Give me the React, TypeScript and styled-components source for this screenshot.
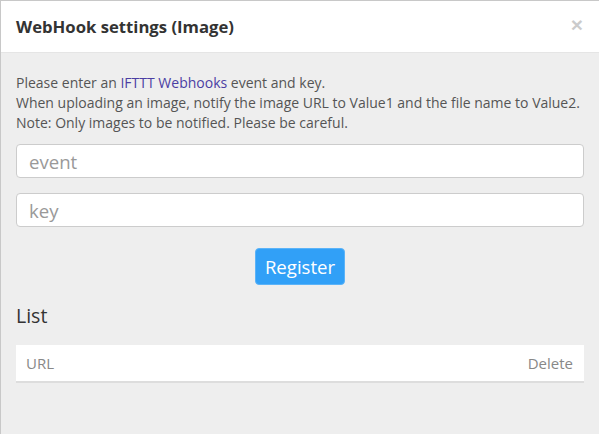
import React from "react";
import styled, { createGlobalStyle } from "styled-components";

const Global = createGlobalStyle`
  html, body { margin: 0; padding: 0; background: #eeeeee; }
  body { font-family: "Open Sans", "Noto Sans", sans-serif; }
  * { box-sizing: border-box; }
`;

const Modal = styled.div`
  width: 599px;
  height: 434px;
  overflow: hidden;
  border-top: 1px solid #c8c8c8;
  border-left: 1px solid #c8c8c8;
  background: #eeeeee;
  display: flex;
  flex-direction: column;
`;

const Header = styled.div`
  background: #ffffff;
  border-bottom: 1px solid #e5e5e5;
  padding: 15px 15px;
  display: flex;
  align-items: center;
  justify-content: space-between;
`;

const Title = styled.h4`
  margin: 0;
  font-size: 16.7px;
  line-height: 21px;
  font-weight: 700;
  color: #333333;
`;

const Close = styled.button`
  border: 0;
  background: transparent;
  padding: 0;
  margin-right: 1px;
  margin-top: -4px;
  font-family: "Liberation Sans", Arial, sans-serif;
  font-size: 21px;
  font-weight: 700;
  line-height: 1;
  color: #000;
  opacity: 0.2;
  text-shadow: 0 1px 0 #fff;
  cursor: pointer;
`;

const Body = styled.div`
  padding: 20px 15px 0 15px;
  display: flex;
  flex-direction: column;
`;

const Intro = styled.p`
  margin: 0 0 11px 0;
  font-size: 14px;
  line-height: 20px;
  color: #555555;
`;

const Link = styled.a`
  color: #4b3ea3;
  text-decoration: none;
`;

const Input = styled.input<{ $gap?: number }>`
  display: block;
  width: 100%;
  height: 34px;
  margin-bottom: ${(p) => p.$gap ?? 0}px;
  padding: 4px 12px;
  font-family: "Open Sans", "Noto Sans", sans-serif;
  font-size: 18.6px;
  color: #555;
  background: #fff;
  border: 1px solid #cccccc;
  border-radius: 4px;
  outline: none;
  &::placeholder { color: #999999; }
`;

const Actions = styled.div`
  display: flex;
  justify-content: center;
  margin-top: 21px;
`;

const Button = styled.button`
  height: 37px;
  padding: 0 9px;
  font-family: "Open Sans", "Noto Sans", sans-serif;
  font-size: 18.6px;
  color: #fff;
  background: #31a0f7;
  border: 1px solid #5bb3f8;
  border-radius: 4px;
  cursor: pointer;
`;

const ListTitle = styled.h3`
  margin: 18px 0 0 0;
  font-size: 19.5px;
  line-height: 26px;
  font-weight: 400;
  color: #333333;
`;

const Table = styled.div`
  margin-top: 16px;
  background: #ffffff;
  border-bottom: 2px solid #dddddd;
`;

const Row = styled.div`
  height: 36px;
  padding: 0 11px 0 10px;
  display: flex;
  align-items: center;
  justify-content: space-between;
  font-size: 15px;
  color: #888888;
`;

export default function App() {
  return (
    <>
      <Global />
      <Modal>
        <Header>
          <Title>WebHook settings (Image)</Title>
          <Close aria-label="Close">×</Close>
        </Header>
        <Body>
          <Intro>
            Please enter an <Link href="#">IFTTT Webhooks</Link> event and key.
            <br />
            When uploading an image, notify the image URL to Value1 and the file name to Value2.
            <br />
            Note: Only images to be notified. Please be careful.
          </Intro>
          <Input placeholder="event" $gap={15} />
          <Input placeholder="key" />
          <Actions>
            <Button>Register</Button>
          </Actions>
          <ListTitle>List</ListTitle>
          <Table>
            <Row>
              <span>URL</span>
              <span>Delete</span>
            </Row>
          </Table>
        </Body>
      </Modal>
    </>
  );
}
